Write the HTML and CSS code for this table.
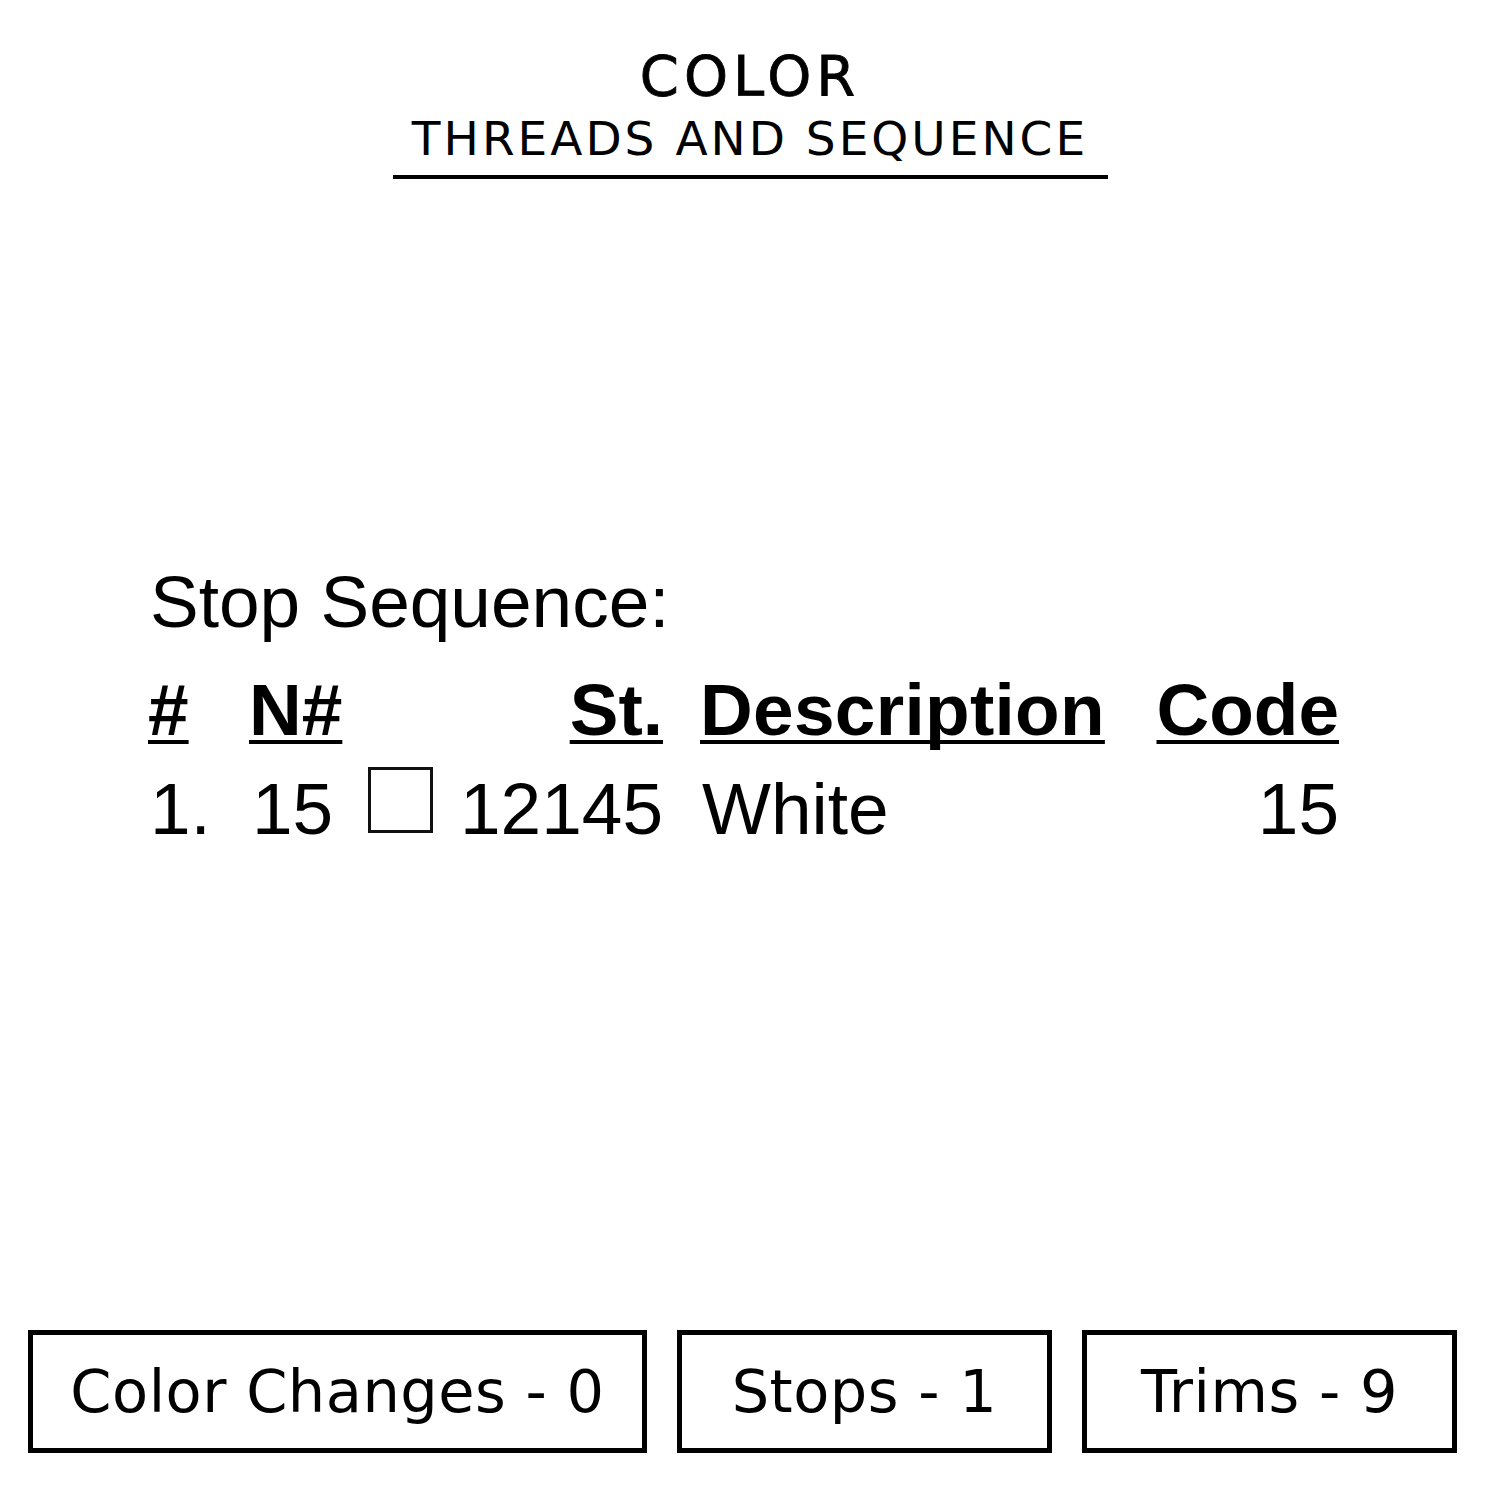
FILE: index.html
```html
<!DOCTYPE html>
<html lang="en">
<head>
<meta charset="utf-8">
<title>Color - Threads and Sequence</title>
<link rel="stylesheet" href="styles.css">
</head>
<body>
<div class="page">
  <header class="heading">
    <div class="title">COLOR</div>
    <div class="subtitle">THREADS AND SEQUENCE</div>
  </header>

  <section class="sequence">
    <div class="seq-title">Stop Sequence:</div>
    <div class="seq-grid">
      <div class="th c1">#</div>
      <div class="th c2">N#</div>
      <div class="th c34 right">St.</div>
      <div class="th c6">Description</div>
      <div class="th c7 right">Code</div>

      <div class="td c1">1.</div>
      <div class="td c2">15</div>
      <div class="td c3"><span class="check"></span></div>
      <div class="td c4 right">12145</div>
      <div class="td c6">White</div>
      <div class="td c7 right">15</div>
    </div>
  </section>

  <footer class="stats">
    <div class="stat stat-wide">Color Changes - 0</div>
    <div class="stat">Stops - 1</div>
    <div class="stat">Trims - 9</div>
  </footer>
</div>
</body>
</html>
```

FILE: styles.css
```css
html, body {
  margin: 0;
  padding: 0;
  background: #ffffff;
}

.page {
  width: 1500px;
  height: 1500px;
  display: flex;
  flex-direction: column;
  color: #000;
}

/* Header */
.heading {
  padding-top: 48px;
  display: flex;
  flex-direction: column;
  align-items: center;
  font-family: "DejaVu Sans", "Noto Sans", sans-serif;
}

.title {
  font-size: 56px;
  line-height: 56px;
  letter-spacing: 5px;
  -webkit-text-stroke: 0.8px #000;
}

.subtitle {
  margin-top: 11px;
  font-size: 47px;
  line-height: 47px;
  letter-spacing: 3px;
  width: 715px;
  text-align: center;
  padding-bottom: 13px;
  border-bottom: 4px solid #000;
}

/* Stop sequence */
.sequence {
  margin-top: 373px;
  padding-left: 148px;
  font-family: "Liberation Sans", Arial, sans-serif;
  font-size: 73px;
  line-height: 100px;
}

.seq-title {
  padding-left: 2px;
}

.seq-grid {
  margin-top: 8px;
  display: grid;
  grid-template-columns: 101px 110px 100px 204px 37px 404px 235px;
  grid-auto-rows: 99px;
}

.th {
  font-weight: bold;
  text-decoration: underline;
  text-decoration-thickness: 4px;
  text-underline-offset: 5px;
  text-decoration-skip-ink: none;
  white-space: nowrap;
}

.td {
  white-space: nowrap;
}

.c1 { grid-column: 1; }
.c2 { grid-column: 2; }
.c3 { grid-column: 3; }
.c4 { grid-column: 4; }
.c34 { grid-column: 3 / 5; }
.c6 { grid-column: 6; }
.c7 { grid-column: 7; }

.td.c1 { padding-left: 2px; }
.td.c2 { padding-left: 3px; }
.th.c6 { padding-left: 0; letter-spacing: 0.3px; }
.td.c6 { padding-left: 2px; }

.right { text-align: right; }

.check {
  display: block;
  margin-top: 8px;
  margin-left: 9px;
  width: 59px;
  height: 60px;
  border: 3px solid #111;
}

/* Stats footer */
.stats {
  margin-top: auto;
  padding: 0 0 47px 28px;
  display: flex;
  gap: 30px;
  font-family: "DejaVu Sans", "Noto Sans", sans-serif;
}

.stat {
  box-sizing: border-box;
  width: 375px;
  height: 123px;
  border: 5px solid #000;
  display: flex;
  align-items: center;
  justify-content: center;
  font-size: 59px;
  line-height: 1;
  letter-spacing: 0.5px;
}

.stat-wide {
  width: 619px;
}
```
